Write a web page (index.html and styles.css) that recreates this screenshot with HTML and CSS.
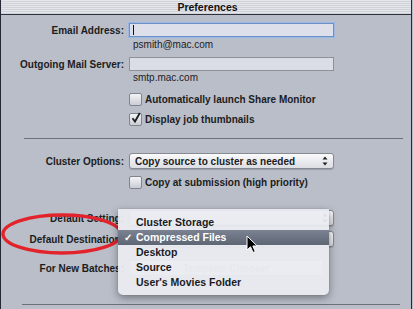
FILE: index.html
```html
<!DOCTYPE html>
<html>
<head>
<meta charset="utf-8">
<link rel="stylesheet" href="styles.css">
</head>
<body>
<div class="window">
  <div class="titlebar">Preferences</div>
  <div class="content">
    <div class="row r-email">
      <div class="label">Email Address:</div>
      <div class="field focus"><span class="caret"></span></div>
    </div>
    <div class="row r-hint1">
      <div class="label"></div>
      <div class="hint">psmith@mac.com</div>
    </div>
    <div class="row r-smtp">
      <div class="label">Outgoing Mail Server:</div>
      <div class="field"></div>
    </div>
    <div class="row r-hint2">
      <div class="label"></div>
      <div class="hint">smtp.mac.com</div>
    </div>
    <div class="row r-cb1">
      <div class="label"></div>
      <div class="check"><span class="box"></span>Automatically launch Share Monitor</div>
    </div>
    <div class="row r-cb2">
      <div class="label"></div>
      <div class="check"><span class="box checked"><svg viewBox="0 0 12 12" width="12" height="12"><path d="M2.5 6.2 L5 9.5 L9.8 1" fill="none" stroke="#1b1d22" stroke-width="1.8"/></svg></span>Display job thumbnails</div>
    </div>
    <div class="sep sep1"></div>
    <div class="row r-cluster">
      <div class="label">Cluster Options:</div>
      <div class="popup"><span class="ptext">Copy source to cluster as needed</span><span class="arrows"><svg viewBox="0 0 6 10" width="6" height="10"><path d="M3 0.5 L5.5 3.5 L0.5 3.5 Z M3 9.5 L5.5 6.5 L0.5 6.5 Z" fill="#222"/></svg></span></div>
    </div>
    <div class="row r-cb3">
      <div class="label"></div>
      <div class="check"><span class="box"></span>Copy at submission (high priority)</div>
    </div>
    <div class="row r-setting">
      <div class="label">Default Setting:</div>
      <div class="popup"><span class="ptext"></span><span class="arrows"><svg viewBox="0 0 6 10" width="6" height="10"><path d="M3 0.5 L5.5 3.5 L0.5 3.5 Z M3 9.5 L5.5 6.5 L0.5 6.5 Z" fill="#222"/></svg></span></div>
    </div>
    <div class="row r-dest">
      <div class="label">Default Destination:</div>
      <div class="popup"><span class="ptext"></span><span class="arrows"><svg viewBox="0 0 6 10" width="6" height="10"><path d="M3 0.5 L5.5 3.5 L0.5 3.5 Z M3 9.5 L5.5 6.5 L0.5 6.5 Z" fill="#222"/></svg></span></div>
    </div>
    <div class="row r-batch">
      <div class="label">For New Batches:</div>
      <div class="button"><span class="btext">Template Chooser</span></div>
    </div>
    <div class="sep sep2"></div>
  </div>

  <svg class="ellipse" width="130" height="48" viewBox="0 0 130 48"><ellipse cx="61" cy="23" rx="59" ry="19" fill="none" stroke="#e3232b" stroke-width="3.4"/></svg>

  <div class="menu">
    <div class="item">Cluster Storage</div>
    <div class="item sel"><span class="tick">✓</span>Compressed Files</div>
    <div class="item">Desktop</div>
    <div class="item">Source</div>
    <div class="item">User's Movies Folder</div>
  </div>

  <svg class="cursor" width="13" height="19" viewBox="0 0 13 19"><path d="M1 1 L1 15 L4.5 11.8 L7 17.5 L9.3 16.5 L6.8 11 L11.2 11 Z" fill="#000" stroke="#fff" stroke-width="1"/></svg>
</div>
</body>
</html>
```

FILE: styles.css
```css
html, body {
  margin: 0;
  padding: 0;
  background: #b8bdc8;
}
body {
  width: 413px;
  height: 309px;
  overflow: hidden;
  font-family: "Liberation Sans", Arial, sans-serif;
  font-size: 10px;
  color: #1c1c1e;
}
.window {
  position: relative;
  width: 410px;
  height: 309px;
  background: #b9bec9;
  border-left: 1px solid #232834;
  border-right: 1px solid #232834;
  overflow: hidden;
}
.titlebar {
  height: 14px;
  line-height: 14px;
  text-align: center;
  font-weight: bold;
  font-size: 10.5px;
  color: #111;
  background: repeating-linear-gradient(to bottom, #e4e6ea 0, #e4e6ea 1px, #cfd2d8 1px, #cfd2d8 2px);
  border-bottom: 1px solid #2e323c;
  padding-left: 3px;
}
.content {
  display: flex;
  flex-direction: column;
}
.row {
  display: flex;
  align-items: center;
  gap: 5px;
}
.label {
  width: 123px;
  flex: none;
  text-align: right;
  font-weight: bold;
  white-space: nowrap;
}
.field {
  width: 203px;
  height: 12px;
  background: #dadde6;
  border: 1px solid #8c9099;
  position: relative;
}
.field.focus {
  background: #dde0ea;
  border-color: #6f8fc9;
  box-shadow: 0 0 0 1px #9db6e0, 0 0 2px 1px #aec4e8;
}
.caret {
  position: absolute;
  left: 3px;
  top: 1px;
  width: 1px;
  height: 10px;
  background: #111;
}
.hint {
  padding-left: 4px;
  line-height: 12px;
  color: #1f2024;
}
.check {
  display: flex;
  align-items: center;
  gap: 3px;
  font-weight: bold;
  height: 13px;
}
.box {
  width: 11px;
  height: 11px;
  border: 1px solid #80848d;
  border-radius: 2px;
  background: linear-gradient(#f4f5f7, #c9ccd3);
  position: relative;
  flex: none;
}
.box svg {
  position: absolute;
  left: 0;
  top: -2px;
}
.popup {
  width: 203px;
  height: 14px;
  border: 1px solid #868a92;
  border-radius: 3px;
  background: linear-gradient(#fbfbfc, #e9eaee 55%, #dcdee3);
  box-shadow: 0 1px 1px rgba(0,0,0,0.18);
  display: flex;
  align-items: center;
  justify-content: space-between;
}
.ptext {
  padding-left: 5px;
  font-weight: bold;
  white-space: nowrap;
}
.arrows {
  display: flex;
  padding-right: 5px;
}
.button {
  width: 193px;
  height: 14px;
  border: 1px solid #a5a9b1;
  border-radius: 3px;
  background: linear-gradient(#f1f2f4, #dfe1e6);
  display: flex;
  align-items: center;
  justify-content: center;
}
.btext {
  font-weight: bold;
  color: #9a9ea6;
}
.sep {
  height: 1px;
  background: #6c707a;
}
.r-email { margin-top: 8px; height: 14px; }
.r-hint1 { margin-top: 2px; height: 12px; }
.r-smtp { margin-top: 6px; height: 14px; }
.r-hint2 { margin-top: 1px; height: 12px; }
.r-cb1 { margin-top: 9px; }
.r-cb2 { margin-top: 7px; }
.sep1 { margin: 12px 8px 0 23px; }
.r-cluster { margin-top: 14px; height: 16px; }
.r-cb3 { margin-top: 7px; }
.r-setting { margin-top: 21px; height: 16px; }
.r-dest { margin-top: 5px; height: 16px; }
.r-batch { margin-top: 13px; height: 16px; }
.sep2 { margin: 28px 11px 0 21px; }

.ellipse {
  position: absolute;
  left: 0;
  top: 211px;
}
.menu {
  position: absolute;
  left: 117px;
  top: 209px;
  width: 211px;
  padding: 6px 0 5px;
  background: rgba(234, 236, 241, 0.94);
  border-radius: 0 0 5px 5px;
  box-shadow: 0 3px 9px rgba(0,0,0,0.38), 0 0 1px rgba(0,0,0,0.4);
}
.item {
  position: relative;
  height: 15px;
  line-height: 15px;
  padding-left: 18px;
  font-weight: bold;
  font-size: 10.5px;
  color: #1a1b1f;
}
.item.sel {
  background: linear-gradient(#7b8291, #5e6573);
  color: #fff;
}
.tick {
  position: absolute;
  left: 6px;
  top: 0;
  font-size: 10px;
}
.cursor {
  position: absolute;
  left: 245px;
  top: 235px;
}
```
